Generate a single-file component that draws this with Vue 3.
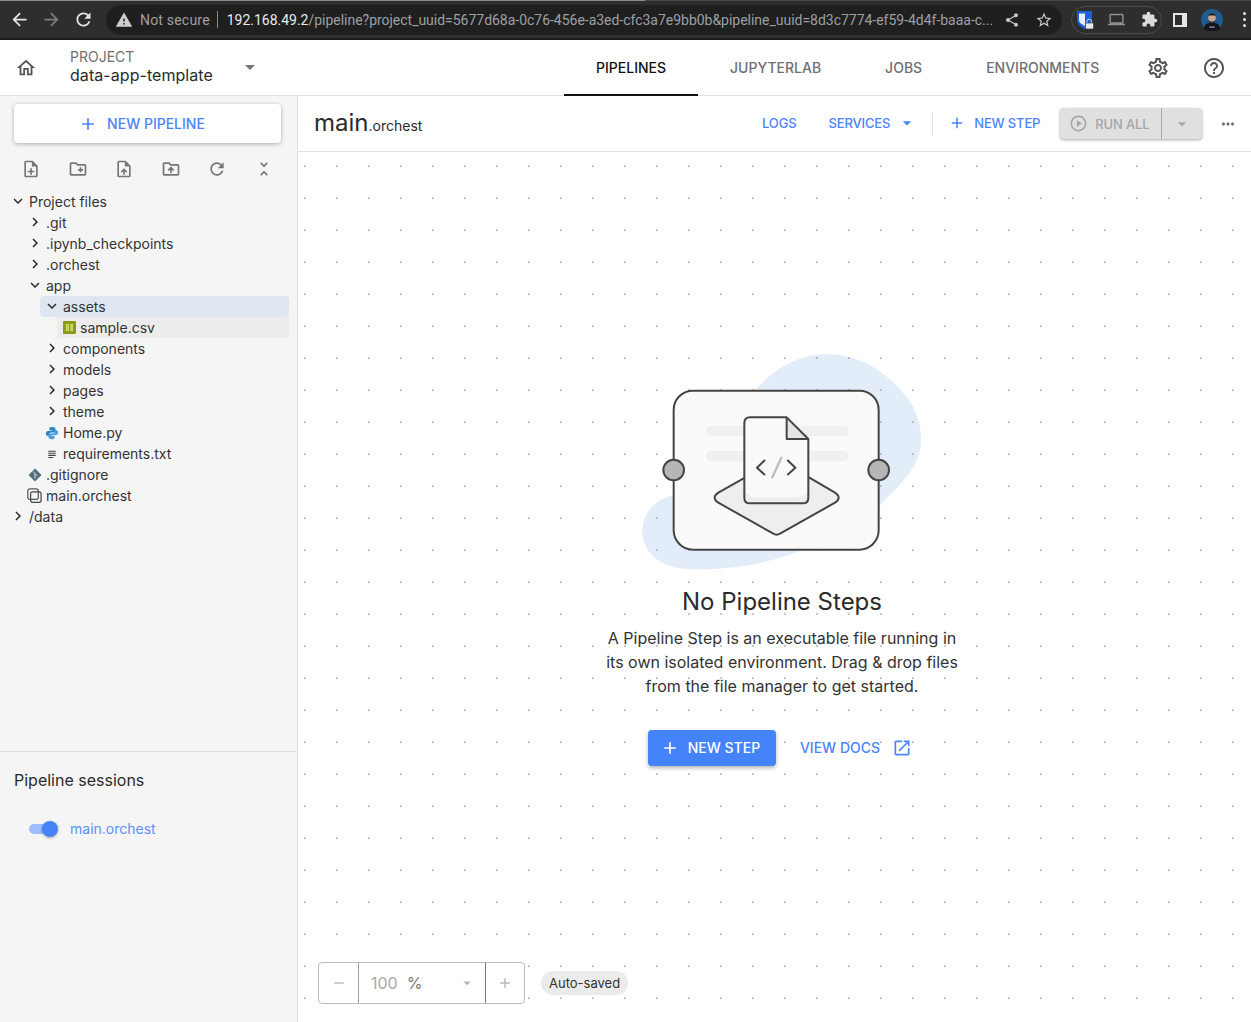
<script setup>
const icons = {
  back: 'M20 11H7.83l5.59-5.59L12 4l-8 8 8 8 1.41-1.41L7.83 13H20v-2z',
  forward: 'M12 4l-1.41 1.41L16.17 11H4v2h12.17l-5.58 5.59L12 20l8-8z',
  refresh: 'M17.65 6.35C16.2 4.9 14.21 4 12 4c-4.42 0-7.99 3.58-7.99 8s3.57 8 7.99 8c3.73 0 6.84-2.55 7.73-6h-2.08c-.82 2.33-3.04 4-5.65 4-3.31 0-6-2.69-6-6s2.69-6 6-6c1.66 0 3.14.69 4.22 1.78L13 11h7V4l-2.35 2.35z',
  warning: 'M1 21h22L12 2 1 21zm12-3h-2v-2h2v2zm0-4h-2v-4h2v4z',
  share: 'M18 16.08c-.76 0-1.44.3-1.96.77L8.91 12.7c.05-.23.09-.46.09-.7s-.04-.47-.09-.7l7.05-4.11c.54.5 1.25.81 2.04.81 1.66 0 3-1.34 3-3s-1.34-3-3-3-3 1.34-3 3c0 .24.04.47.09.7L8.04 9.81C7.5 9.31 6.79 9 6 9c-1.66 0-3 1.34-3 3s1.34 3 3 3c.79 0 1.5-.31 2.04-.81l7.12 4.16c-.05.21-.08.43-.08.65 0 1.61 1.31 2.92 2.92 2.92 1.61 0 2.92-1.31 2.92-2.92s-1.31-2.92-2.92-2.92z',
  star: 'M22 9.24l-7.19-.62L12 2 9.19 8.63 2 9.24l5.46 4.73L5.82 21 12 17.27 18.18 21l-1.63-7.03L22 9.24zM12 15.4l-3.76 2.27 1-4.28-3.32-2.88 4.38-.38L12 6.1l1.71 4.04 4.38.38-3.32 2.88 1 4.28L12 15.4z',
  laptop: 'M20 18c1.1 0 1.99-.9 1.99-2L22 6c0-1.1-.9-2-2-2H4c-1.1 0-2 .9-2 2v10c0 1.1.9 2 2 2H0v2h24v-2h-4zM4 6h16v10H4V6z',
  puzzle: 'M20.5 11H19V7c0-1.1-.9-2-2-2h-4V3.5C13 2.12 11.88 1 10.5 1S8 2.12 8 3.5V5H4c-1.1 0-1.99.9-1.99 2v3.8H3.5c1.49 0 2.7 1.21 2.7 2.7s-1.21 2.7-2.7 2.7H2V20c0 1.1.9 2 2 2h3.8v-1.5c0-1.49 1.21-2.7 2.7-2.7 1.49 0 2.7 1.21 2.7 2.7V22H17c1.1 0 2-.9 2-2v-4h1.5c1.38 0 2.5-1.12 2.5-2.5S21.88 11 20.5 11z',
  home: 'M12 5.69l5 4.5V18h-2v-6H9v6H7v-7.81l5-4.5M12 3L2 12h3v8h6v-6h2v6h6v-8h3L12 3z',
  gear: 'M19.43 12.98c.04-.32.07-.64.07-.98 0-.34-.03-.66-.07-.98l2.11-1.65c.19-.15.24-.42.12-.64l-2-3.46c-.09-.16-.26-.25-.44-.25-.06 0-.12.01-.17.03l-2.49 1c-.52-.4-1.08-.73-1.69-.98l-.38-2.65C14.46 2.18 14.25 2 14 2h-4c-.25 0-.46.18-.49.42l-.38 2.65c-.61.25-1.17.59-1.69.98l-2.49-1c-.06-.02-.12-.03-.18-.03-.17 0-.34.09-.43.25l-2 3.46c-.13.22-.07.49.12.64l2.11 1.65c-.04.32-.07.65-.07.98 0 .33.03.66.07.98l-2.11 1.65c-.19.15-.24.42-.12.64l2 3.46c.09.16.26.25.44.25.06 0 .12-.01.17-.03l2.49-1c.52.4 1.08.73 1.69.98l.38 2.65c.03.24.24.42.49.42h4c.25 0 .46-.18.49-.42l.38-2.65c.61-.25 1.17-.59 1.69-.98l2.49 1c.06.02.12.03.18.03.17 0 .34-.09.43-.25l2-3.46c.12-.22.07-.49-.12-.64l-2.11-1.65zm-1.98-1.71c.04.31.05.52.05.73 0 .21-.02.43-.05.73l-.14 1.13.89.7 1.08.84-.7 1.21-1.27-.51-1.04-.42-.9.68c-.43.32-.84.56-1.25.73l-1.06.43-.16 1.13-.2 1.35h-1.4l-.19-1.35-.16-1.13-1.06-.43c-.43-.18-.83-.41-1.23-.71l-.91-.7-1.06.43-1.27.51-.7-1.21 1.08-.84.89-.7-.14-1.13c-.03-.31-.05-.54-.05-.74s.02-.43.05-.73l.14-1.13-.89-.7-1.08-.84.7-1.21 1.27.51 1.04.42.9-.68c.43-.32.84-.56 1.25-.73l1.06-.43.16-1.13.2-1.35h1.39l.19 1.35.16 1.13 1.06.43c.43.18.83.41 1.23.71l.91.7 1.06-.43 1.27-.51.7 1.21-1.07.85-.89.7.14 1.13zM12 8c-2.21 0-4 1.79-4 4s1.79 4 4 4 4-1.79 4-4-1.79-4-4-4zm0 6c-1.1 0-2-.9-2-2s.9-2 2-2 2 .9 2 2-.9 2-2 2z',
  help: 'M11 18h2v-2h-2v2zm1-16C6.48 2 2 6.48 2 12s4.48 10 10 10 10-4.48 10-10S17.52 2 12 2zm0 18c-4.41 0-8-3.59-8-8s3.59-8 8-8 8 3.59 8 8-3.59 8-8 8zm0-14c-2.21 0-4 1.79-4 4h2c0-1.1.9-2 2-2s2 .9 2 2c0 2-3 1.75-3 5h2c0-2.25 3-2.5 3-5 0-2.21-1.79-4-4-4z',
  add: 'M19 13h-6v6h-2v-6H5v-2h6V5h2v6h6v2z',
  remove: 'M19 13H5v-2h14v2z',
  play: 'M10 16.5l6-4.5-6-4.5v9zM12 2C6.48 2 2 6.48 2 12s4.48 10 10 10 10-4.48 10-10S17.52 2 12 2zm0 18c-4.41 0-8-3.59-8-8s3.59-8 8-8 8 3.59 8 8-3.59 8-8 8z',
  more: 'M6 10c-1.1 0-2 .9-2 2s.9 2 2 2 2-.9 2-2-.9-2-2-2zm12 0c-1.1 0-2 .9-2 2s.9 2 2 2 2-.9 2-2-.9-2-2-2zm-6 0c-1.1 0-2 .9-2 2s.9 2 2 2 2-.9 2-2-.9-2-2-2z',
  external: 'M19 19H5V5h7V3H5c-1.11 0-2 .9-2 2v14c0 1.1.89 2 2 2h14c1.1 0 2-.9 2-2v-7h-2v7zM14 3v2h3.59l-9.83 9.83 1.41 1.41L19 6.41V10h2V3h-7z',
  caret: 'M7 10l5 5 5-5z',
  down: 'M16.59 8.59L12 13.17 7.41 8.59 6 10l6 6 6-6z',
  right: 'M10 6L8.59 7.41 13.17 12l-4.58 4.59L10 18l6-6z',
  lines: 'M3 4h18v2.500H3zM3 9h18v2.500H3zM3 14h18v2.500H3zM3 19h12v2.500H3z'
}

const fileActions = [
  'M13 11h-2v3H8v2h3v3h2v-3h3v-2h-3zm1-9H6c-1.1 0-2 .9-2 2v16c0 1.1.89 2 1.99 2H18c1.1 0 2-.9 2-2V8l-6-6zm4 18H6V4h7v5h5v11z',
  'M20 6h-8l-2-2H4c-1.11 0-1.99.89-1.99 2L2 18c0 1.11.89 2 2 2h16c1.11 0 2-.89 2-2V8c0-1.11-.89-2-2-2zm0 12H4V6h5.17l2 2H20v10zm-8-4h2v2h2v-2h2v-2h-2v-2h-2v2h-2z',
  'M14 2H6c-1.1 0-1.99.9-1.99 2L4 20c0 1.1.89 2 1.99 2H18c1.1 0 2-.9 2-2V8l-6-6zm4 18H6V4h7v5h5v11zM8 15.01l1.41 1.41L11 14.84V19h2v-4.16l1.59 1.59L16 15.01 12.01 11 8 15.01z',
  'M20 6h-8l-2-2H4c-1.1 0-1.99.9-1.99 2L2 18c0 1.1.9 2 2 2h16c1.1 0 2-.9 2-2V8c0-1.1-.9-2-2-2zm0 12H4V6h5.17l2 2H20v10zM9.41 14.42L11 12.84V17h2v-4.16l1.59 1.59L16 13.01 12.01 9 8 13.01l1.41 1.41z',
  icons.refresh,
  'M7.41 18.59L8.83 20 12 16.83 15.17 20l1.41-1.41L12 14l-4.59 4.59zm9.18-13.18L15.17 4 12 7.17 8.83 4 7.41 5.41 12 10l4.59-4.59z'
]

const tree = [
  { name: 'Project files', depth: 0, icon: 'down' },
  { name: '.git', depth: 1, icon: 'right' },
  { name: '.ipynb_checkpoints', depth: 1, icon: 'right' },
  { name: '.orchest', depth: 1, icon: 'right' },
  { name: 'app', depth: 1, icon: 'down' },
  { name: 'assets', depth: 2, icon: 'down', state: 'selected' },
  { name: 'sample.csv', depth: 3, icon: 'csv', state: 'hover' },
  { name: 'components', depth: 2, icon: 'right' },
  { name: 'models', depth: 2, icon: 'right' },
  { name: 'pages', depth: 2, icon: 'right' },
  { name: 'theme', depth: 2, icon: 'right' },
  { name: 'Home.py', depth: 2, icon: 'python' },
  { name: 'requirements.txt', depth: 2, icon: 'lines' },
  { name: '.gitignore', depth: 1, icon: 'git' },
  { name: 'main.orchest', depth: 1, icon: 'layers' },
  { name: '/data', depth: 0, icon: 'right' }
]

const tabs = ['PIPELINES', 'JUPYTERLAB', 'JOBS', 'ENVIRONMENTS']
</script>

<template>
  <div class="page">
    <div class="browser">
      <div class="tab-edge"></div>
      <div class="browser-row">
        <svg class="nav-icon" viewBox="0 0 24 24"><path :d="icons.back" /></svg>
        <svg class="nav-icon dim" viewBox="0 0 24 24"><path :d="icons.forward" /></svg>
        <svg class="nav-icon" viewBox="0 0 24 24"><path :d="icons.refresh" /></svg>
        <div class="omnibox">
          <svg class="warn" viewBox="0 0 24 24"><path :d="icons.warning" /></svg>
          <span class="insecure">Not secure</span>
          <span class="url-sep"></span>
          <span class="url"><b>192.168.49.2</b>/pipeline?project_uuid=5677d68a-0c76-456e-a3ed-cfc3a7e9bb0b&amp;pipeline_uuid=8d3c7774-ef59-4d4f-baaa-c...</span>
          <svg class="omni-icon" viewBox="0 0 24 24"><path :d="icons.share" /></svg>
          <svg class="omni-icon star" viewBox="0 0 24 24"><path :d="icons.star" /></svg>
        </div>
        <div class="extensions">
          <svg class="shield" viewBox="0 0 17 18">
            <path d="M0 0h15v9c0 4-3 6.500-7.500 9C3 15.500 0 13 0 9z" fill="#1a5fdc" />
            <path d="M2 2.500h6v12.500C4 13 2 11.500 2 9z" fill="#e8eef8" />
            <path d="M10 12V10.500a2.300 2.300 0 0 1 4.600 0V12" fill="none" stroke="#d8d8d8" />
            <rect x="8.500" y="12" width="8" height="6" rx="1" fill="#e8eaed" stroke="#2d2d2d" stroke-width=".6" />
          </svg>
          <svg class="ext-icon laptop" viewBox="0 0 24 24"><path :d="icons.laptop" /></svg>
          <svg class="ext-icon puzzle" viewBox="0 0 24 24"><path :d="icons.puzzle" /></svg>
        </div>
        <svg class="panel" viewBox="0 0 16 16">
          <path fill-rule="evenodd" d="M1 1h14v14H1zM3 3v10h7V3z" />
        </svg>
        <svg class="avatar" viewBox="0 0 24 24">
          <circle cx="12" cy="12" r="12" fill="#1f5c8f" />
          <path d="M3 22c.5-5 3.500-7 9-7s8.500 2 9 7c-2.500 1.500-5.500 2-9 2s-6.500-.5-9-2z" fill="#14171a" />
          <path d="M9 19h6v1.500H9z" fill="#8a8f96" />
          <circle cx="12" cy="9.500" r="4.200" fill="#c9a58f" />
          <path d="M7.500 8.500C7.500 3.500 16.500 3.500 16.500 8.500L15.500 7h-7z" fill="#222" />
          <path d="M8 10.500c.5 5 7.500 5 8 0l-.5 3.500-3.500 2-3.500-2z" fill="#2b2b2b" />
        </svg>
        <div class="kebab"><i></i><i></i><i></i></div>
      </div>
    </div>

    <header class="app-header">
      <svg class="home" viewBox="0 0 24 24"><path :d="icons.home" /></svg>
      <div class="project">
        <span class="project-label">PROJECT</span>
        <span class="project-name">data-app-template</span>
      </div>
      <svg class="project-caret" viewBox="0 0 24 24"><path :d="icons.caret" /></svg>
      <nav class="tabs">
        <a v-for="(tab, i) in tabs" :key="tab" class="tab" :class="{ active: i === 0 }">{{ tab }}</a>
      </nav>
      <svg class="head-icon gear" viewBox="0 0 24 24"><path :d="icons.gear" /></svg>
      <svg class="head-icon help" viewBox="0 0 24 24"><path :d="icons.help" /></svg>
    </header>

    <div class="body">
      <aside class="sidebar">
        <div class="files">
          <button class="new-pipeline">
            <svg viewBox="0 0 24 24"><path :d="icons.add" /></svg>
            NEW PIPELINE
          </button>
          <div class="file-actions">
            <svg v-for="(d, i) in fileActions" :key="i" viewBox="0 0 24 24"><path :d="d" /></svg>
          </div>
          <ul class="tree">
            <li
              v-for="item in tree"
              :key="item.name"
              class="tree-row"
              :class="item.state"
              :style="{ marginLeft: 6 + item.depth * 17 + 'px' }"
            >
              <span class="tree-icon">
                <svg v-if="item.icon === 'csv'" class="csv" viewBox="0 0 14 14">
                  <rect width="14" height="14" rx="1" fill="#8a9a12" />
                  <path d="M3 3h3.500v8H3zM7.500 3H11v8H7.500z" fill="#c4cf66" />
                </svg>
                <svg v-else-if="item.icon === 'python'" class="py" viewBox="0 0 16 16">
                  <path d="M8 1C5 1 5 2.300 5 3.200V5h3.200v.6H3.500C2 5.600 1 6.800 1 8.500s1 3 2.400 3H5V9.800c0-1.300 1-2.300 2.300-2.300h2.900c1 0 1.800-.8 1.800-1.800V3.200C12 1.800 10.500 1 8 1z" fill="#2f86c9" />
                  <path d="M8 15c3 0 3-1.300 3-2.200V11H7.800v-.6h4.700c1.500 0 2.500-1.200 2.500-2.900s-1-3-2.400-3H11v1.700c0 1.300-1 2.300-2.300 2.300H5.800C4.800 8.500 4 9.300 4 10.300v2.500C4 14.200 5.500 15 8 15z" fill="#4aa3e0" />
                </svg>
                <svg v-else-if="item.icon === 'git'" class="git" viewBox="0 0 14 14">
                  <path d="M7 .5 13.500 7 7 13.500.5 7z" fill="#546e7a" />
                  <path d="M5 3.500 9 7.500M7 6v4.500" stroke="#f5f5f5" stroke-width=".9" fill="none" />
                </svg>
                <svg v-else-if="item.icon === 'layers'" class="layers" viewBox="0 0 15 15">
                  <rect x=".8" y=".8" width="10.500" height="10.500" rx="2" fill="none" stroke="#555" stroke-width="1.200" />
                  <rect x="3.600" y="3.800" width="10.500" height="10.500" rx="2" fill="none" stroke="#444" stroke-width="1.200" />
                </svg>
                <svg v-else :class="item.icon" viewBox="0 0 24 24"><path :d="icons[item.icon]" /></svg>
              </span>
              <span class="tree-name">{{ item.name }}</span>
            </li>
          </ul>
        </div>
        <section class="sessions">
          <h3>Pipeline sessions</h3>
          <div class="session">
            <span class="toggle"><i></i></span>
            <span class="session-name">main.orchest</span>
          </div>
        </section>
      </aside>

      <main class="main">
        <div class="toolbar">
          <div class="pipeline-name">main<small>.orchest</small></div>
          <a class="tool-link logs">LOGS</a>
          <a class="tool-link services">SERVICES<svg viewBox="0 0 24 24"><path :d="icons.caret" /></svg></a>
          <span class="tool-sep"></span>
          <a class="tool-link new-step">
            <svg viewBox="0 0 24 24"><path :d="icons.add" /></svg>NEW STEP
          </a>
          <div class="run-all">
            <span class="run-label"><svg viewBox="0 0 24 24"><path :d="icons.play" /></svg>RUN ALL</span>
            <span class="run-caret"><svg viewBox="0 0 24 24"><path :d="icons.caret" /></svg></span>
          </div>
          <svg class="tool-more" viewBox="0 0 24 24"><path :d="icons.more" /></svg>
        </div>

        <div class="canvas">
          <div class="empty">
            <svg class="illustration" viewBox="6 0 900 705">
              <path class="blob" d="M378 135C430 70 510 25 600 28 700 32 770 85 825 150 875 210 885 290 860 345 830 415 770 450 745 490L530 610C440 650 310 675 190 673 110 672 50 640 38 575 30 510 70 465 130 450z" />
              <rect x="131" y="137" width="615" height="477" rx="58" fill="#fafafa" stroke="#444" stroke-width="6" />
              <rect x="228" y="242" width="428" height="31" rx="15" fill="#f0f0f0" />
              <rect x="228" y="318" width="428" height="31" rx="15" fill="#f0f0f0" />
              <path d="M345 398 265 443Q243 458 265 473L430 566Q440 572 450 566L615 473Q637 458 615 443L533 395z" fill="#eee" stroke="#444" stroke-width="6" stroke-linejoin="round" />
              <path d="M360 217H470L535 282V458Q535 475 518 475H360Q343 475 343 458V234Q343 217 360 217z" fill="#fafafa" />
              <path d="M344 440Q360 457 385 457H495Q520 457 534 440V458Q534 474 518 474H360Q344 474 344 458z" fill="#eee" />
              <path d="M470 217 535 282H470z" fill="#e4e4e4" />
              <path d="M470 217H360Q343 217 343 234V458Q343 475 360 475H518Q535 475 535 458V282L470 217V282H535" fill="none" stroke="#444" stroke-width="6" stroke-linejoin="round" />
              <path d="M405 345 381 368 405 390M472 345 496 368 472 390" fill="none" stroke="#444" stroke-width="6" />
              <path d="M454 338 427 397" fill="none" stroke="#bdbdbd" stroke-width="7" stroke-linecap="round" />
              <circle cx="131" cy="375" r="31" fill="#b6b6b6" stroke="#444" stroke-width="6" />
              <circle cx="746" cy="375" r="31" fill="#b6b6b6" stroke="#444" stroke-width="6" />
            </svg>
            <h2>No Pipeline Steps</h2>
            <p>A Pipeline Step is an executable file running in its own isolated environment. Drag &amp; drop files from the file manager to get started.</p>
            <div class="empty-actions">
              <button class="primary">
                <svg viewBox="0 0 24 24"><path :d="icons.add" /></svg>NEW STEP
              </button>
              <a class="docs">VIEW DOCS<svg viewBox="0 0 24 24"><path :d="icons.external" /></svg></a>
            </div>
          </div>

          <div class="canvas-footer">
            <div class="zoom">
              <span class="zoom-btn minus"><svg viewBox="0 0 24 24"><path :d="icons.remove" /></svg></span>
              <span class="zoom-value">
                <span class="zoom-num">100</span><span class="zoom-pct">%</span>
                <svg viewBox="0 0 24 24"><path :d="icons.caret" /></svg>
              </span>
              <span class="zoom-btn plus"><svg viewBox="0 0 24 24"><path :d="icons.add" /></svg></span>
            </div>
            <span class="saved">Auto-saved</span>
          </div>
        </div>
      </main>
    </div>
  </div>
</template>

<style scoped>
.page {
  width: 1251px;
  height: 1022px;
  display: flex;
  flex-direction: column;
  overflow: hidden;
  font-family: Inter, "Liberation Sans", sans-serif;
  color: #2b2b2b;
  background: #fff;
}

svg {
  display: block;
  flex: none;
  fill: currentColor;
}

/* browser chrome */
.browser {
  height: 40px;
  flex: none;
  background: #2e2e2e;
  border-bottom: 2px solid #1c1c1c;
  box-sizing: border-box;
}

.tab-edge {
  height: 1px;
  background: linear-gradient(to right, #8a8a8a 645px, #484848 645px);
}

.browser-row {
  height: 37px;
  display: flex;
  align-items: center;
  padding-left: 9px;
  color: #e6e6e6;
}

.nav-icon {
  width: 21px;
  height: 21px;
  margin-right: 11px;
}

.nav-icon.dim {
  color: #7d7d7d;
}

.omnibox {
  width: 956px;
  height: 30px;
  margin-left: 1px;
  border-radius: 15px;
  background: #1f1f1f;
  display: flex;
  align-items: center;
  padding-left: 9px;
  box-sizing: border-box;
  font-family: Roboto, sans-serif;
  font-size: 14px;
  white-space: nowrap;
}

.warn {
  width: 18px;
  height: 18px;
  color: #cfcfcf;
}

.insecure {
  margin-left: 7px;
  letter-spacing: 0.2px;
  color: #a0a0a0;
}

.url-sep {
  width: 1px;
  height: 17px;
  margin: 0 9px 0 7px;
  background: #8a8a8a;
}

.url {
  width: 766px;
  flex: none;
  letter-spacing: -0.02px;
  color: #9aa0a6;
}

.url b {
  font-weight: 400;
  color: #e8eaed;
}

.omni-icon {
  width: 16px;
  height: 16px;
  margin-left: 11px;
  color: #c8c8c8;
}

.omni-icon.star {
  width: 18px;
  height: 18px;
  margin-left: 15px;
}

.extensions {
  width: 91px;
  height: 28px;
  margin-left: 9px;
  border: 1px solid #4c4c4c;
  border-radius: 14px;
  box-sizing: border-box;
  display: flex;
  align-items: center;
  padding-left: 5px;
}

.shield {
  width: 17px;
  height: 18px;
}

.ext-icon {
  width: 17px;
  height: 17px;
  color: #dcdcdc;
}

.ext-icon.laptop {
  margin-left: 14px;
  color: #8f8f8f;
}

.ext-icon.puzzle {
  margin-left: 16px;
}

.panel {
  width: 16px;
  height: 16px;
  margin-left: 10px;
  color: #e6e6e6;
}

.avatar {
  width: 22px;
  height: 22px;
  margin-left: 13px;
}

.kebab {
  display: flex;
  flex-direction: column;
  gap: 3px;
  margin-left: 20px;
}

.kebab i {
  width: 3px;
  height: 3px;
  border-radius: 50%;
  background: #e6e6e6;
}

/* app header */
.app-header {
  height: 56px;
  flex: none;
  display: flex;
  align-items: center;
  box-sizing: border-box;
  border-bottom: 1px solid #e0e0e0;
  padding-left: 15px;
}

.home {
  width: 22px;
  height: 22px;
  color: #555;
}

.project {
  display: flex;
  flex-direction: column;
  margin: -2px 0 0 33px;
  width: 168px;
}

.project-label {
  font-size: 14px;
  line-height: 17px;
  color: #6f6f6f;
}

.project-name {
  font-size: 16px;
  line-height: 21px;
  letter-spacing: 0.06px;
}

.project-caret {
  width: 24px;
  height: 24px;
  color: #757575;
  margin-top: -2px;
}

.tabs {
  display: flex;
  align-self: stretch;
  margin-left: 302px;
}

.tab {
  display: flex;
  align-items: center;
  padding: 0 32px;
  height: 56px;
  box-sizing: border-box;
  font-size: 14px;
  font-weight: 500;
  color: #6f6f6f;
}

.tab.active {
  color: #111;
  border-bottom: 2px solid #111;
}

.tab:not(.active) {
  padding-bottom: 1px;
}

.head-icon {
  width: 24px;
  height: 24px;
  color: #555;
}

.gear {
  margin-left: 15px;
}

.help {
  margin-left: 32px;
}

/* body */
.body {
  flex: 1;
  min-height: 0;
  display: flex;
}

.sidebar {
  width: 298px;
  flex: none;
  box-sizing: border-box;
  background: #f5f5f5;
  border-right: 1px solid #e0e0e0;
  display: flex;
  flex-direction: column;
}

.files {
  flex: 1;
  min-height: 0;
}

.new-pipeline {
  width: 267px;
  height: 39px;
  margin: 8px 0 0 14px;
  padding: 0 12px 0 0;
  border: 0;
  border-radius: 4px;
  background: #fff;
  box-shadow: 0 1px 4px rgba(0, 0, 0, 0.3);
  display: flex;
  align-items: center;
  justify-content: center;
  gap: 9px;
  font-family: inherit;
  font-size: 14px;
  font-weight: 500;
  color: #4b84fb;
}

.new-pipeline svg {
  width: 20px;
  height: 20px;
}

.file-actions {
  display: flex;
  justify-content: space-between;
  margin: 16px 0 0 21px;
  width: 253px;
  color: #757575;
}

.file-actions svg {
  width: 20px;
  height: 20px;
}

.tree {
  list-style: none;
  margin: 12px 8px 0 0;
  padding: 0;
}

.tree-row {
  height: 21px;
  display: flex;
  align-items: center;
  padding-left: 6px;
  border-radius: 4px;
  font-size: 14px;
  color: #333;
}

.tree-row.selected {
  background: #dde6f1;
}

.tree-row.hover {
  background: #ececec;
  border-radius: 0;
}

.tree-icon {
  width: 17px;
  flex: none;
  display: flex;
  align-items: center;
}

.tree-icon .down,
.tree-icon .right {
  width: 18px;
  height: 18px;
  margin: -2px 0 0 -3px;
  color: #2b2b2b;
}

.tree-icon .csv {
  width: 13px;
  height: 13px;
}

.tree-icon .py {
  width: 14px;
  height: 14px;
  margin-left: -1px;
}

.tree-icon .git {
  width: 14px;
  height: 14px;
  margin-left: -1px;
}

.tree-icon .layers {
  width: 15px;
  height: 15px;
  margin-left: -2px;
}

.tree-icon .lines {
  width: 10px;
  height: 10px;
  margin-left: 1px;
  color: #444;
}

.sessions {
  height: 271px;
  flex: none;
  box-sizing: border-box;
  border-top: 1px solid #ddd;
  padding: 18px 14px 0;
}

.sessions h3 {
  margin: 0;
  font-size: 16px;
  line-height: 20px;
  font-weight: 400;
}

.session {
  display: flex;
  align-items: center;
  margin-top: 30px;
  padding-left: 15px;
}

.toggle {
  position: relative;
  width: 24px;
  height: 10px;
  border-radius: 5px;
  background: #9dbdfd;
}

.toggle i {
  position: absolute;
  right: -5px;
  top: -3px;
  width: 16px;
  height: 16px;
  border-radius: 50%;
  background: #4583fb;
  box-shadow: 0 1px 3px rgba(0, 0, 0, 0.3);
}

.session-name {
  margin-left: 17px;
  font-size: 14px;
  color: #5e8ffa;
}

/* main */
.main {
  flex: 1;
  min-width: 0;
  display: flex;
  flex-direction: column;
}

.toolbar {
  height: 56px;
  flex: none;
  box-sizing: border-box;
  border-bottom: 1px solid #e0e0e0;
  display: flex;
  align-items: center;
  padding-left: 16px;
}

.pipeline-name {
  width: 448px;
  font-size: 24px;
  line-height: 32px;
  padding-top: 2px;
  white-space: nowrap;
}

.pipeline-name small {
  font-size: 14px;
}

.tool-link {
  display: flex;
  align-items: center;
  margin-top: -1px;
  font-size: 13px;
  font-weight: 500;
  letter-spacing: -0.15px;
  color: #4b84fb;
  white-space: nowrap;
}

.services {
  margin-left: 32px;
}

.services svg {
  width: 20px;
  height: 20px;
  margin-left: 7px;
}

.tool-sep {
  width: 1px;
  height: 24px;
  margin: 0 0 0 15px;
  background: #e0e0e0;
}

.new-step {
  margin-left: 15px;
}

.new-step svg {
  width: 18px;
  height: 18px;
  margin-right: 8px;
}

.run-all {
  width: 142px;
  height: 31px;
  margin-left: 20px;
  display: flex;
  border-radius: 4px;
  background: #e0e0e0;
  box-shadow: 0 1px 3px rgba(0, 0, 0, 0.35);
  color: #a6a6a6;
  font-size: 13px;
  font-weight: 500;
  letter-spacing: -0.15px;
}

.run-label {
  width: 102px;
  display: flex;
  align-items: center;
  padding-left: 9px;
  gap: 7px;
  box-sizing: border-box;
  border-right: 1px solid #a8a8a8;
}

.run-label svg {
  width: 19px;
  height: 19px;
}

.run-caret {
  flex: 1;
  display: flex;
  align-items: center;
  justify-content: center;
}

.run-caret svg {
  width: 20px;
  height: 20px;
}

.tool-more {
  width: 18px;
  height: 18px;
  margin-left: 17px;
  color: #666;
}

.canvas {
  position: relative;
  flex: 1;
  min-height: 0;
  display: flex;
  align-items: center;
  justify-content: center;
  padding: 0 0 63px 15px;
  box-sizing: border-box;
  background-image: radial-gradient(circle at center, #c9c9c9 0, #c9c9c9 1px, transparent 1.5px);
  background-size: 32px 32px;
  background-position: -9px -2px;
}

.empty {
  width: 380px;
  display: flex;
  flex-direction: column;
  align-items: center;
  text-align: center;
}

.illustration {
  width: 300px;
  height: 235px;
}

.blob {
  fill: #4f8bdc;
  fill-opacity: 0.16;
}

.empty h2 {
  margin: 6px 0 0;
  font-size: 24px;
  line-height: 32px;
  font-weight: 400;
  color: #2b2b2b;
}

.empty p {
  margin: 8px 0 0;
  width: 360px;
  font-size: 16px;
  line-height: 24px;
  color: #333;
}

.empty-actions {
  display: flex;
  align-items: center;
  margin: 32px 4px 0 0;
}

.primary {
  height: 36px;
  width: 128px;
  padding: 0 4px 1px 0;
  border: 0;
  border-radius: 4px;
  background: #4583fb;
  color: #fff;
  box-shadow: 0 2px 4px rgba(0, 0, 0, 0.3);
  display: flex;
  align-items: center;
  justify-content: center;
  gap: 8px;
  font-family: inherit;
  font-size: 14px;
  font-weight: 500;
}

.primary svg {
  width: 20px;
  height: 20px;
}

.docs {
  display: flex;
  align-items: center;
  margin-left: 24px;
  padding-bottom: 1px;
  font-size: 14px;
  font-weight: 500;
  color: #4b84fb;
}

.docs svg {
  width: 20px;
  height: 20px;
  margin-left: 12px;
}

.canvas-footer {
  position: absolute;
  left: 20px;
  bottom: 18px;
  display: flex;
  align-items: center;
  gap: 16px;
}

.zoom {
  width: 207px;
  height: 42px;
  box-sizing: border-box;
  display: flex;
  background: #fff;
  border: 1px solid #bdbdbd;
  border-radius: 4px;
}

.zoom-btn {
  width: 39px;
  flex: none;
  display: flex;
  align-items: center;
  justify-content: center;
  color: #b5b5b5;
}

.zoom-btn.plus {
  width: 38px;
}

.zoom-btn svg {
  width: 16px;
  height: 16px;
}

.zoom-value {
  flex: 1;
  display: flex;
  align-items: center;
  padding-left: 12px;
  border-left: 1px solid #9e9e9e;
  border-right: 1px solid #757575;
}

.zoom-num {
  font-size: 16px;
  color: #a8a8a8;
}

.zoom-pct {
  margin-left: 9px;
  font-size: 16px;
  color: #757575;
}

.zoom-value svg {
  width: 18px;
  height: 18px;
  margin-left: 36px;
  color: #b5b5b5;
}

.saved {
  height: 24px;
  padding: 0 8px;
  border-radius: 12px;
  background: #ebebeb;
  display: flex;
  align-items: center;
  font-size: 13px;
  color: #333;
}
</style>
